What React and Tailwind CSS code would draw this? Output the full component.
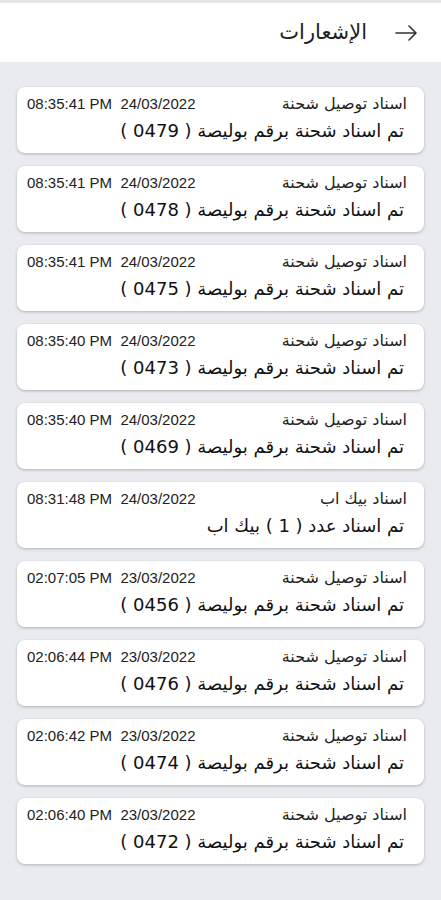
import React from "react";

const items = [
  { title: "اسناد توصيل شحنة", body: "تم اسناد شحنة برقم بوليصة ( 0479 )", date: "24/03/2022", time: "08:35:41 PM" },
  { title: "اسناد توصيل شحنة", body: "تم اسناد شحنة برقم بوليصة ( 0478 )", date: "24/03/2022", time: "08:35:41 PM" },
  { title: "اسناد توصيل شحنة", body: "تم اسناد شحنة برقم بوليصة ( 0475 )", date: "24/03/2022", time: "08:35:41 PM" },
  { title: "اسناد توصيل شحنة", body: "تم اسناد شحنة برقم بوليصة ( 0473 )", date: "24/03/2022", time: "08:35:40 PM" },
  { title: "اسناد توصيل شحنة", body: "تم اسناد شحنة برقم بوليصة ( 0469 )", date: "24/03/2022", time: "08:35:40 PM" },
  { title: "اسناد بيك اب", body: "تم اسناد عدد ( 1 ) بيك اب", date: "24/03/2022", time: "08:31:48 PM" },
  { title: "اسناد توصيل شحنة", body: "تم اسناد شحنة برقم بوليصة ( 0456 )", date: "23/03/2022", time: "02:07:05 PM" },
  { title: "اسناد توصيل شحنة", body: "تم اسناد شحنة برقم بوليصة ( 0476 )", date: "23/03/2022", time: "02:06:44 PM" },
  { title: "اسناد توصيل شحنة", body: "تم اسناد شحنة برقم بوليصة ( 0474 )", date: "23/03/2022", time: "02:06:42 PM" },
  { title: "اسناد توصيل شحنة", body: "تم اسناد شحنة برقم بوليصة ( 0472 )", date: "23/03/2022", time: "02:06:40 PM" },
];

const NotificationCard = ({ item }) => (
  <div className="bg-white rounded-lg shadow-[0_1px_3px_rgba(0,0,0,0.25)] h-[66px] pr-[17px] pl-[10px] pt-[6px]">
    <div className="flex items-center justify-between h-[22px]">
      <span className="text-[16px] leading-[22px] text-[#222]">{item.title}</span>
      <span dir="ltr" className="text-[15px] leading-[22px] text-[#222] font-['Liberation_Sans',sans-serif]">
        {item.time}&nbsp;&nbsp;{item.date}
      </span>
    </div>
    <div className="text-[18px] text-[#111] mt-[3px] pr-[3px] leading-[26px]">{item.body}</div>
  </div>
);

export default function App() {
  return (
    <div dir="rtl" className="w-[441px] min-h-[900px] bg-[#e9ebef] font-['DejaVu_Sans',sans-serif]">
      <div className="h-[3px] bg-[#e3e5e8]" />
      <div className="h-[59px] bg-white flex items-center pr-[24px] gap-[28px]">
        <svg width="22" height="16" viewBox="0 0 22 16" fill="none" stroke="#333" strokeWidth="1.6" strokeLinecap="round" strokeLinejoin="round">
          <path d="M1 8h20M14 1l7 7-7 7" />
        </svg>
        <span className="text-[21px] text-[#222]">الإشعارات</span>
      </div>
      <div className="px-[17px] pt-[25px] pb-[30px] flex flex-col gap-[13px]">
        {items.map((item, i) => (
          <NotificationCard key={i} item={item} />
        ))}
      </div>
    </div>
  );
}
